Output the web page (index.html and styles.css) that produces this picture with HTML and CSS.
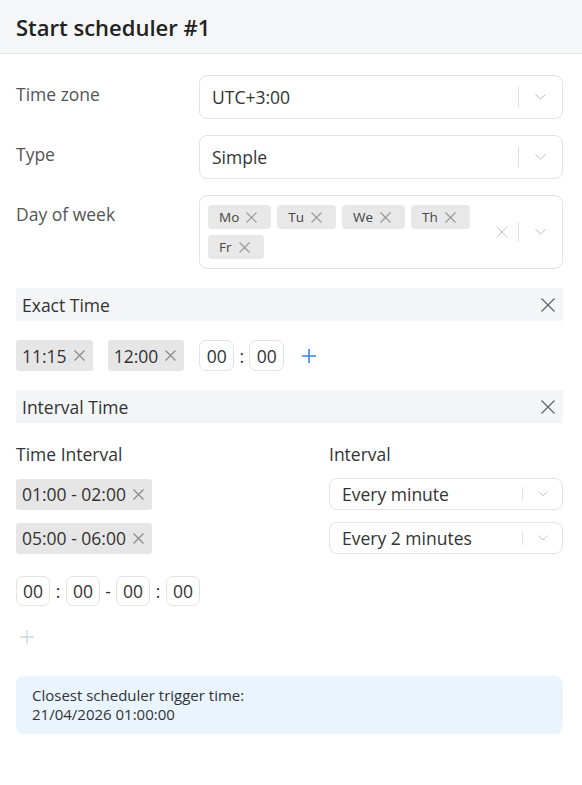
FILE: index.html
```html
<!DOCTYPE html>
<html lang="en">
<head>
    <meta charset="UTF-8">
    <meta name="viewport" content="width=device-width, initial-scale=1.0">
    <title>Start scheduler</title>
    <link rel="stylesheet" href="styles.css">
</head>
<body>
    <header class="panel-head">
        <h1>Start scheduler #1</h1>
    </header>

    <main class="panel-body">
        <div class="fields">
            <div class="field">
                <label class="field-label">Time zone</label>
                <div class="select">
                    <span class="select-value">UTC+3:00</span>
                    <span class="select-sep"></span>
                    <span class="select-arrow">
                        <svg width="11" height="6" viewBox="0 0 11 6"><path d="M0.5 0.5 L5.5 5 L10.5 0.5" fill="none" stroke="#bdbdbd" stroke-width="1"/></svg>
                    </span>
                </div>
            </div>
            <div class="field">
                <label class="field-label">Type</label>
                <div class="select">
                    <span class="select-value">Simple</span>
                    <span class="select-sep"></span>
                    <span class="select-arrow">
                        <svg width="11" height="6" viewBox="0 0 11 6"><path d="M0.5 0.5 L5.5 5 L10.5 0.5" fill="none" stroke="#bdbdbd" stroke-width="1"/></svg>
                    </span>
                </div>
            </div>
            <div class="field">
                <label class="field-label">Day of week</label>
                <div class="select select-multi">
                    <div class="day-tags">
                        <span class="day-tag">Mo<span class="tag-x"><svg width="11" height="11" viewBox="0 0 11 11"><path d="M0.5 0.5 L10.5 10.5 M10.5 0.5 L0.5 10.5" stroke="#9a9a9a" stroke-width="1.2"/></svg></span></span>
                        <span class="day-tag">Tu<span class="tag-x"><svg width="11" height="11" viewBox="0 0 11 11"><path d="M0.5 0.5 L10.5 10.5 M10.5 0.5 L0.5 10.5" stroke="#9a9a9a" stroke-width="1.2"/></svg></span></span>
                        <span class="day-tag">We<span class="tag-x"><svg width="11" height="11" viewBox="0 0 11 11"><path d="M0.5 0.5 L10.5 10.5 M10.5 0.5 L0.5 10.5" stroke="#9a9a9a" stroke-width="1.2"/></svg></span></span>
                        <span class="day-tag">Th<span class="tag-x"><svg width="11" height="11" viewBox="0 0 11 11"><path d="M0.5 0.5 L10.5 10.5 M10.5 0.5 L0.5 10.5" stroke="#9a9a9a" stroke-width="1.2"/></svg></span></span>
                        <span class="day-tag">Fr<span class="tag-x"><svg width="11" height="11" viewBox="0 0 11 11"><path d="M0.5 0.5 L10.5 10.5 M10.5 0.5 L0.5 10.5" stroke="#9a9a9a" stroke-width="1.2"/></svg></span></span>
                    </div>
                    <span class="select-clear">
                        <svg width="12" height="12" viewBox="0 0 12 12"><path d="M0.5 0.5 L11.5 11.5 M11.5 0.5 L0.5 11.5" stroke="#c8c8c8" stroke-width="1"/></svg>
                    </span>
                    <span class="select-sep"></span>
                    <span class="select-arrow">
                        <svg width="11" height="6" viewBox="0 0 11 6"><path d="M0.5 0.5 L5.5 5 L10.5 0.5" fill="none" stroke="#bdbdbd" stroke-width="1"/></svg>
                    </span>
                </div>
            </div>
        </div>

        <section class="block">
            <div class="block-head">
                <span>Exact Time</span>
                <span class="block-close">
                    <svg width="14" height="14" viewBox="0 0 14 14"><path d="M0.5 0.5 L13.5 13.5 M13.5 0.5 L0.5 13.5" stroke="#666" stroke-width="1.3"/></svg>
                </span>
            </div>
            <div class="time-row">
                <span class="time-tag">11:15<span class="tag-x"><svg width="11" height="11" viewBox="0 0 11 11"><path d="M0.5 0.5 L10.5 10.5 M10.5 0.5 L0.5 10.5" stroke="#8a8a8a" stroke-width="1.2"/></svg></span></span>
                <span class="time-tag">12:00<span class="tag-x"><svg width="11" height="11" viewBox="0 0 11 11"><path d="M0.5 0.5 L10.5 10.5 M10.5 0.5 L0.5 10.5" stroke="#8a8a8a" stroke-width="1.2"/></svg></span></span>
                <span class="time-box">00</span>
                <span class="time-sep">:</span>
                <span class="time-box">00</span>
                <span class="add-btn">
                    <svg width="16" height="16" viewBox="0 0 16 16"><path d="M8 1 V15 M1 8 H15" stroke="#3a84e0" stroke-width="1.6"/></svg>
                </span>
            </div>
        </section>

        <section class="block">
            <div class="block-head">
                <span>Interval Time</span>
                <span class="block-close">
                    <svg width="14" height="14" viewBox="0 0 14 14"><path d="M0.5 0.5 L13.5 13.5 M13.5 0.5 L0.5 13.5" stroke="#666" stroke-width="1.3"/></svg>
                </span>
            </div>
            <div class="interval-grid">
                <div class="col-label">Time Interval</div>
                <div class="col-label">Interval</div>

                <div class="interval-cell"><span class="time-tag">01:00 - 02:00<span class="tag-x"><svg width="11" height="11" viewBox="0 0 11 11"><path d="M0.5 0.5 L10.5 10.5 M10.5 0.5 L0.5 10.5" stroke="#8a8a8a" stroke-width="1.2"/></svg></span></span></div>
                <div class="select select-small">
                    <span class="select-value">Every minute</span>
                    <span class="select-sep"></span>
                    <span class="select-arrow">
                        <svg width="10" height="6" viewBox="0 0 10 6"><path d="M0.5 0.5 L5 5 L9.5 0.5" fill="none" stroke="#c8c8c8" stroke-width="1"/></svg>
                    </span>
                </div>

                <div class="interval-cell"><span class="time-tag">05:00 - 06:00<span class="tag-x"><svg width="11" height="11" viewBox="0 0 11 11"><path d="M0.5 0.5 L10.5 10.5 M10.5 0.5 L0.5 10.5" stroke="#8a8a8a" stroke-width="1.2"/></svg></span></span></div>
                <div class="select select-small">
                    <span class="select-value">Every 2 minutes</span>
                    <span class="select-sep"></span>
                    <span class="select-arrow">
                        <svg width="10" height="6" viewBox="0 0 10 6"><path d="M0.5 0.5 L5 5 L9.5 0.5" fill="none" stroke="#c8c8c8" stroke-width="1"/></svg>
                    </span>
                </div>
            </div>
            <div class="range-row">
                <span class="time-box">00</span>
                <span class="time-sep">:</span>
                <span class="time-box">00</span>
                <span class="time-sep">-</span>
                <span class="time-box">00</span>
                <span class="time-sep">:</span>
                <span class="time-box">00</span>
            </div>
            <div class="add-muted">
                <svg width="16" height="16" viewBox="0 0 16 16"><path d="M8 1 V15 M1 8 H15" stroke="#cdd8e8" stroke-width="1.4"/></svg>
            </div>
        </section>

        <div class="info-box">
            Closest scheduler trigger time:<br>
            21/04/2026 01:00:00
        </div>
    </main>
</body>
</html>
```

FILE: styles.css
```css
body {
    margin: 0;
    font-family: "Open Sans", "Noto Sans", sans-serif;
    color: #333;
    background: #fff;
}
.panel-head {
    height: 53px;
    display: flex;
    align-items: center;
    padding: 0 16px;
    background: #f5f6f7;
    border-bottom: 1px solid #e4e5e6;
}
.panel-head h1 {
    margin: 0;
    font-size: 22px;
    font-weight: 600;
    color: #222;
}
.panel-body {
    padding: 21px 19px 0 16px;
}
.fields {
    display: flex;
    flex-direction: column;
    gap: 16px;
}
.field {
    display: grid;
    grid-template-columns: 183px 1fr;
}
.field-label {
    padding-top: 7px;
    font-size: 17.5px;
    line-height: 24px;
    color: #555;
}
.select {
    box-sizing: border-box;
    min-height: 44px;
    display: flex;
    align-items: center;
    padding-left: 12px;
    border: 1px solid #e3e3e3;
    border-radius: 8px;
    background: #fff;
}
.select-value {
    flex: 1;
    font-size: 17.5px;
    color: #333;
}
.select-sep {
    width: 1px;
    height: 20px;
    background: #dcdcdc;
}
.select-arrow {
    width: 43px;
    display: flex;
    justify-content: center;
}
.select-clear {
    width: 32px;
    display: flex;
    justify-content: center;
}
.select-multi {
    padding: 9px 0 9px 8px;
}
.day-tags {
    flex: 1;
    display: flex;
    flex-wrap: wrap;
    gap: 6px;
}
.day-tag {
    height: 24px;
    display: inline-flex;
    align-items: center;
    padding: 0 14px 0 11px;
    background: #e8e8e8;
    border-radius: 4px;
    font-size: 13.5px;
    color: #444;
}
.tag-x {
    display: inline-flex;
    margin-left: 7px;
}
.block {
    margin-top: 19px;
}
.block-head {
    height: 33px;
    display: flex;
    align-items: center;
    justify-content: space-between;
    padding: 0 8px 0 6px;
    background: #f4f5f6;
    font-size: 17.5px;
    color: #333;
}
.block-close {
    display: inline-flex;
}
.time-row {
    margin-top: 19px;
    display: flex;
    align-items: center;
}
.time-tag {
    box-sizing: border-box;
    height: 31px;
    display: inline-flex;
    align-items: center;
    padding: 0 8px 0 6px;
    background: #e6e6e6;
    border-radius: 3px;
    font-size: 17.5px;
    color: #333;
}
.time-row .time-tag {
    margin-right: 15px;
}
.time-box {
    box-sizing: border-box;
    width: 35px;
    height: 31px;
    display: inline-flex;
    align-items: center;
    justify-content: center;
    border: 1px solid #e3e3e3;
    border-radius: 7px;
    font-size: 17.5px;
    color: #333;
}
.time-sep {
    width: 15px;
    text-align: center;
    font-size: 17.5px;
}
.add-btn {
    display: inline-flex;
    margin-left: 17px;
}
.interval-grid {
    margin-top: 19px;
    display: grid;
    grid-template-columns: 313px 1fr;
    row-gap: 12px;
}
.col-label {
    font-size: 17.5px;
    line-height: 24px;
    color: #333;
}
.interval-cell {
    display: flex;
    align-items: center;
}
.select-small {
    min-height: 32px;
}
.select-small .select-sep {
    height: 14px;
    background: #e4e4e4;
}
.select-small .select-arrow {
    width: 39px;
}
.range-row {
    margin-top: 22px;
    display: flex;
    align-items: center;
}
.range-row .time-box {
    width: 34px;
    height: 30px;
}
.range-row .time-sep {
    width: 16px;
}
.add-muted {
    margin: 23px 0 0 3px;
    display: flex;
}
.info-box {
    margin-top: 31px;
    padding: 10px 16px;
    background: #eaf4fe;
    border-radius: 8px;
    font-size: 15px;
    line-height: 19px;
    color: #333;
}
```
